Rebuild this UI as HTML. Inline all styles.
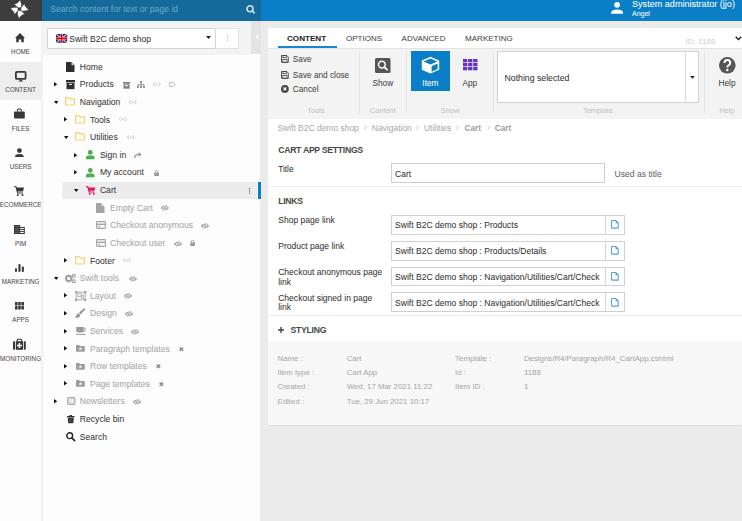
<!DOCTYPE html><html><head><meta charset="utf-8"><style>
*{box-sizing:border-box;margin:0;padding:0}
html,body{width:742px;height:521px;overflow:hidden;background:#ebebeb;font-family:"Liberation Sans",sans-serif;color:#333}
.a{position:absolute}
svg{position:absolute;overflow:visible}
.t{position:absolute;white-space:nowrap;line-height:1;-webkit-text-stroke:0.04px currentColor}
</style></head><body>
<div class="a" style="left:0px;top:0px;width:42px;height:21px;background:#3d3d3d"></div>
<svg style="left:0px;top:0px" width="42" height="21" viewBox="0 0 42 21"><g fill="#fff" stroke="#3d3d3d" stroke-width="0.55" transform="translate(19.5,9.2)"><path d="M-1.2,-1.4 L-5.4,-4.9 Q-1.8,-5.4 0.6,-9.4 Q2.4,-5.6 1.9,-1.6 Z"/><g transform="rotate(90)"><path d="M-1.2,-1.4 L-5.4,-4.9 Q-1.8,-5.4 0.6,-9.4 Q2.4,-5.6 1.9,-1.6 Z"/></g><g transform="rotate(180)"><path d="M-1.2,-1.4 L-5.4,-4.9 Q-1.8,-5.4 0.6,-9.4 Q2.4,-5.6 1.9,-1.6 Z"/></g><g transform="rotate(270)"><path d="M-1.2,-1.4 L-5.4,-4.9 Q-1.8,-5.4 0.6,-9.4 Q2.4,-5.6 1.9,-1.6 Z"/></g></g></svg>
<div class="a" style="left:42px;top:0px;width:219px;height:21px;background:#156a9c"></div>
<div class="t" style="left:50.2px;top:5px;font-size:8.66px;height:8.66px;line-height:8.66px;color:#6fa6c8;font-weight:normal;">Search content for text or page id</div>
<svg style="left:246px;top:5px" width="10" height="9" viewBox="0 0 10 9"><circle cx="4" cy="3.8" r="3" fill="none" stroke="#d6e6f0" stroke-width="1.5"/><path d="M6.2,6 L8.6,8.4" stroke="#d6e6f0" stroke-width="1.7"/></svg>
<div class="a" style="left:261px;top:0px;width:481px;height:21px;background:#0a7ec6"></div>
<svg style="left:610.6px;top:2px" width="12.2" height="12" viewBox="0 0 12.2 12"><circle cx="6.1" cy="2.9" r="2.8" fill="#fff"/><path d="M0,11.7 Q0,7.6 6.1,7.6 Q12.2,7.6 12.2,11.7 Z" fill="#fff"/></svg>
<div class="t" style="left:632px;top:0px;font-size:9.08px;height:9.08px;line-height:9.08px;color:#fff;font-weight:normal;">System administrator (jjo)</div>
<div class="t" style="left:632px;top:10px;font-size:7.0px;height:7.0px;line-height:7.0px;color:#fff;font-weight:normal;">Angel</div>
<div class="a" style="left:0px;top:21px;width:41px;height:500px;background:#fdfdfd"></div>
<div class="a" style="left:0px;top:61.5px;width:41px;height:38.3px;background:#eeeeee"></div>
<div class="t" style="left:-129.4px;width:300px;text-align:center;top:49px;font-size:6.3px;height:6.3px;line-height:6.3px;color:#4a4a4a;font-weight:normal;letter-spacing:0.02px">HOME</div>
<div class="t" style="left:-129.4px;width:300px;text-align:center;top:87px;font-size:6.3px;height:6.3px;line-height:6.3px;color:#4a4a4a;font-weight:normal;letter-spacing:0.02px">CONTENT</div>
<div class="t" style="left:-129.4px;width:300px;text-align:center;top:126px;font-size:6.3px;height:6.3px;line-height:6.3px;color:#4a4a4a;font-weight:normal;letter-spacing:0.02px">FILES</div>
<div class="t" style="left:-129.4px;width:300px;text-align:center;top:164px;font-size:6.3px;height:6.3px;line-height:6.3px;color:#4a4a4a;font-weight:normal;letter-spacing:0.02px">USERS</div>
<div class="t" style="left:-129.4px;width:300px;text-align:center;top:202px;font-size:6.3px;height:6.3px;line-height:6.3px;color:#4a4a4a;font-weight:normal;letter-spacing:0.02px">ECOMMERCE</div>
<div class="t" style="left:-129.4px;width:300px;text-align:center;top:241px;font-size:6.3px;height:6.3px;line-height:6.3px;color:#4a4a4a;font-weight:normal;letter-spacing:0.02px">PIM</div>
<div class="t" style="left:-129.4px;width:300px;text-align:center;top:279px;font-size:6.3px;height:6.3px;line-height:6.3px;color:#4a4a4a;font-weight:normal;letter-spacing:0.02px">MARKETING</div>
<div class="t" style="left:-129.4px;width:300px;text-align:center;top:317px;font-size:6.3px;height:6.3px;line-height:6.3px;color:#4a4a4a;font-weight:normal;letter-spacing:0.02px">APPS</div>
<div class="t" style="left:-129.4px;width:300px;text-align:center;top:356px;font-size:6.3px;height:6.3px;line-height:6.3px;color:#4a4a4a;font-weight:normal;letter-spacing:0.02px">MONITORING</div>
<svg style="left:14.5px;top:33px" width="10" height="9.2" viewBox="0 0 10 9.2"><path d="M5,0 L10,5 L8.8,5 L8.8,9.2 L6.3,9.2 L6.3,6.5 L3.7,6.5 L3.7,9.2 L1.2,9.2 L1.2,5 L0,5 Z" fill="#383838"/></svg>
<svg style="left:14.9px;top:70.8px" width="11.5" height="10.6" viewBox="0 0 11.5 10.6"><rect x="0.9" y="0.9" width="9.7" height="7" rx="1" fill="none" stroke="#383838" stroke-width="1.8"/><path d="M3.5,10.6 L5.75,8 L8,10.6 Z" fill="#383838"/></svg>
<svg style="left:14px;top:109px" width="10.8" height="9.6" viewBox="0 0 10.8 9.6"><path d="M3.5,2.6 L3.5,1 Q3.5,0 4.5,0 L6.3,0 Q7.3,0 7.3,1 L7.3,2.6" fill="none" stroke="#383838" stroke-width="1.1"/><rect x="0" y="2.4" width="10.8" height="7.2" rx="0.8" fill="#383838"/></svg>
<svg style="left:15px;top:148px" width="9" height="9" viewBox="0 0 9 9"><circle cx="4.4" cy="2.6" r="2.4" fill="#383838"/><path d="M0,9 Q0,6 4.4,6 Q8.8,6 8.8,9 Z" fill="#383838"/></svg>
<svg style="left:13.8px;top:185.8px" width="10.2" height="10.2" viewBox="0 0 10.2 10.2"><path d="M0.3,0.5 L2,0.8 L3.6,7 L9,7" fill="none" stroke="#383838" stroke-width="1.1"/><path d="M2.2,1.6 L10,1.6 L9,5.4 L3.2,5.4 Z" fill="#383838"/><circle cx="3.8" cy="9" r="1.05" fill="#383838"/><circle cx="8.5" cy="9" r="1.05" fill="#383838"/></svg>
<svg style="left:14px;top:224.8px" width="10.8" height="9" viewBox="0 0 10.8 9"><rect x="0.5" y="0.5" width="5.2" height="8" fill="none" stroke="#383838" stroke-width="1"/><rect x="0.5" y="2.5" width="9.8" height="6" fill="none" stroke="#383838" stroke-width="1"/><path d="M1,2.5 H5.5 M1,4.5 H10 M1,6.5 H10" stroke="#383838" stroke-width="0.9"/><rect x="0.5" y="0.5" width="5.2" height="8" fill="#383838" opacity="0.8"/></svg>
<svg style="left:15px;top:263.8px" width="9" height="8" viewBox="0 0 9 8"><rect x="0" y="4.2" width="2" height="3.8" rx="0.9" fill="#383838"/><rect x="3.4" y="0" width="2.1" height="8" rx="0.9" fill="#383838"/><rect x="6.8" y="2.5" width="2.1" height="5.5" rx="0.9" fill="#383838"/></svg>
<svg style="left:15px;top:302px" width="9" height="7.6" viewBox="0 0 9 7.6"><rect x="0.0" y="0.0" width="2.6" height="3.4" rx="0.3" fill="#383838"/><rect x="3.2" y="0.0" width="2.6" height="3.4" rx="0.3" fill="#383838"/><rect x="6.4" y="0.0" width="2.6" height="3.4" rx="0.3" fill="#383838"/><rect x="0.0" y="4.1" width="2.6" height="3.4" rx="0.3" fill="#383838"/><rect x="3.2" y="4.1" width="2.6" height="3.4" rx="0.3" fill="#383838"/><rect x="6.4" y="4.1" width="2.6" height="3.4" rx="0.3" fill="#383838"/></svg>
<svg style="left:13.1px;top:338.8px" width="12.8" height="10.8" viewBox="0 0 12.8 10.8"><path d="M4.2,2.3 V1 Q4.2,0.3 5,0.3 H7.8 Q8.6,0.3 8.6,1 V2.3" fill="none" stroke="#383838" stroke-width="1.1"/><rect x="0" y="2.2" width="2" height="8.6" rx="0.8" fill="#383838"/><rect x="10.8" y="2.2" width="2" height="8.6" rx="0.8" fill="#383838"/><rect x="2.8" y="2.2" width="7.2" height="8.6" fill="#383838"/><path d="M6.4,4 V9 M3.9,6.5 H8.9" stroke="#fff" stroke-width="1.6"/></svg>
<div class="a" style="left:41px;top:21px;width:220px;height:500px;background:#fdfdfd"></div>
<div class="a" style="left:40.8px;top:21px;width:2.3px;height:500px;background:#f1f1f1"></div>
<div class="a" style="left:41px;top:21px;width:210px;height:33.6px;background:#f3f3f3"></div>
<div class="a" style="left:251px;top:21px;width:10px;height:33px;background:#e3e3e3"></div>
<svg style="left:254.5px;top:34px" width="4" height="6" viewBox="0 0 4 6"><path d="M3.5,0 L0,3 L3.5,6 Z" fill="#fafafa"/></svg>
<div class="a" style="left:261px;top:21px;width:7px;height:500px;background:#ebebeb"></div>
<div class="a" style="left:260px;top:54.6px;width:1px;height:467px;background:linear-gradient(90deg,#f6f6f6,#e6e6e6)"></div>
<div class="a" style="left:47.3px;top:28px;width:168.5px;height:20.8px;background:#fff;border:1px solid #d4d4d4;border-radius:1px"></div>
<div class="a" style="left:215.8px;top:28px;width:23.6px;height:20.8px;background:#fff;border:1px solid #e2e2e2;border-left:none"></div>
<svg style="left:226.8px;top:35.3px" width="1" height="6" viewBox="0 0 1 6"><circle cx="0.5" cy="0.6" r="0.55" fill="#aaa"/><circle cx="0.5" cy="2.9" r="0.55" fill="#aaa"/><circle cx="0.5" cy="5.2" r="0.55" fill="#aaa"/></svg>
<svg style="left:206.3px;top:36.2px" width="5" height="3" viewBox="0 0 5 3"><path d="M0,0 H5 L2.5,3 Z" fill="#222"/></svg>
<svg style="left:55.8px;top:34px" width="11.2" height="8.75" viewBox="0 0 11.2 8.75"><svg width="11.2" height="8.75" viewBox="0 0 60 40" preserveAspectRatio="none"><rect width="60" height="40" fill="#00247d"/><path d="M0,0 L60,40 M60,0 L0,40" stroke="#fff" stroke-width="6"/><path d="M0,0 L60,40 M60,0 L0,40" stroke="#d0202a" stroke-width="2.2"/><path d="M30,0 V40 M0,20 H60" stroke="#fff" stroke-width="11"/><path d="M30,0 V40 M0,20 H60" stroke="#e00" stroke-width="7"/></svg></svg>
<div class="t" style="left:69.3px;top:35px;font-size:8.5px;height:8.5px;line-height:8.5px;color:#333;font-weight:normal;">Swift B2C demo shop</div>
<div class="a" style="left:61.7px;top:181.7px;width:195px;height:17.3px;background:#ececec"></div>
<div class="a" style="left:257.5px;top:181.7px;width:3.5px;height:17.3px;background:#0a7ec6"></div>
<svg style="left:249px;top:187.6px" width="1" height="6" viewBox="0 0 1 6"><circle cx="0.5" cy="0.7" r="0.6" fill="#444"/><circle cx="0.5" cy="2.9" r="0.6" fill="#444"/><circle cx="0.5" cy="5.1" r="0.6" fill="#444"/></svg>
<div class="t" style="left:79.8px;top:63px;font-size:8.6px;height:8.6px;line-height:8.6px;color:#383838;font-weight:normal;">Home</div>
<svg style="left:54px;top:82.11px" width="3.2" height="4.6" viewBox="0 0 3.2 4.6"><path d="M0,0 L3.2,2.3 L0,4.6 Z" fill="#111"/></svg>
<div class="t" style="left:79.8px;top:80px;font-size:8.6px;height:8.6px;line-height:8.6px;color:#383838;font-weight:normal;">Products</div>
<svg style="left:53.6px;top:100.72px" width="4.4" height="3" viewBox="0 0 4.4 3"><path d="M0,0 H4.4 L2.2,3 Z" fill="#111"/></svg>
<div class="t" style="left:79.8px;top:98px;font-size:8.6px;height:8.6px;line-height:8.6px;color:#383838;font-weight:normal;">Navigation</div>
<svg style="left:64.3px;top:117.33px" width="3.2" height="4.6" viewBox="0 0 3.2 4.6"><path d="M0,0 L3.2,2.3 L0,4.6 Z" fill="#111"/></svg>
<div class="t" style="left:90px;top:116px;font-size:8.6px;height:8.6px;line-height:8.6px;color:#383838;font-weight:normal;">Tools</div>
<svg style="left:63.9px;top:135.94px" width="4.4" height="3" viewBox="0 0 4.4 3"><path d="M0,0 H4.4 L2.2,3 Z" fill="#111"/></svg>
<div class="t" style="left:90px;top:133px;font-size:8.6px;height:8.6px;line-height:8.6px;color:#383838;font-weight:normal;">Utilities</div>
<svg style="left:74px;top:152.54999999999998px" width="3.2" height="4.6" viewBox="0 0 3.2 4.6"><path d="M0,0 L3.2,2.3 L0,4.6 Z" fill="#111"/></svg>
<div class="t" style="left:99.9px;top:151px;font-size:8.6px;height:8.6px;line-height:8.6px;color:#383838;font-weight:normal;">Sign in</div>
<svg style="left:74px;top:170.15999999999997px" width="3.2" height="4.6" viewBox="0 0 3.2 4.6"><path d="M0,0 L3.2,2.3 L0,4.6 Z" fill="#111"/></svg>
<div class="t" style="left:99.9px;top:168px;font-size:8.6px;height:8.6px;line-height:8.6px;color:#383838;font-weight:normal;">My account</div>
<svg style="left:73.6px;top:188.76999999999998px" width="4.4" height="3" viewBox="0 0 4.4 3"><path d="M0,0 H4.4 L2.2,3 Z" fill="#111"/></svg>
<div class="t" style="left:99.9px;top:186px;font-size:8.6px;height:8.6px;line-height:8.6px;color:#383838;font-weight:normal;">Cart</div>
<div class="t" style="left:110px;top:204px;font-size:8.6px;height:8.6px;line-height:8.6px;color:#a6a6a6;font-weight:normal;">Empty Cart</div>
<div class="t" style="left:110px;top:221px;font-size:8.6px;height:8.6px;line-height:8.6px;color:#a6a6a6;font-weight:normal;">Checkout anonymous</div>
<div class="t" style="left:110px;top:239px;font-size:8.6px;height:8.6px;line-height:8.6px;color:#a6a6a6;font-weight:normal;">Checkout user</div>
<svg style="left:64.3px;top:258.21px" width="3.2" height="4.6" viewBox="0 0 3.2 4.6"><path d="M0,0 L3.2,2.3 L0,4.6 Z" fill="#111"/></svg>
<div class="t" style="left:90px;top:257px;font-size:8.6px;height:8.6px;line-height:8.6px;color:#383838;font-weight:normal;">Footer</div>
<svg style="left:53.6px;top:276.82px" width="4.4" height="3" viewBox="0 0 4.4 3"><path d="M0,0 H4.4 L2.2,3 Z" fill="#111"/></svg>
<div class="t" style="left:79.8px;top:274px;font-size:8.6px;height:8.6px;line-height:8.6px;color:#a6a6a6;font-weight:normal;">Swift tools</div>
<svg style="left:64.3px;top:293.43px" width="3.2" height="4.6" viewBox="0 0 3.2 4.6"><path d="M0,0 L3.2,2.3 L0,4.6 Z" fill="#111"/></svg>
<div class="t" style="left:90px;top:292px;font-size:8.6px;height:8.6px;line-height:8.6px;color:#a6a6a6;font-weight:normal;">Layout</div>
<svg style="left:64.3px;top:311.03999999999996px" width="3.2" height="4.6" viewBox="0 0 3.2 4.6"><path d="M0,0 L3.2,2.3 L0,4.6 Z" fill="#111"/></svg>
<div class="t" style="left:90px;top:309px;font-size:8.6px;height:8.6px;line-height:8.6px;color:#a6a6a6;font-weight:normal;">Design</div>
<svg style="left:64.3px;top:328.65px" width="3.2" height="4.6" viewBox="0 0 3.2 4.6"><path d="M0,0 L3.2,2.3 L0,4.6 Z" fill="#111"/></svg>
<div class="t" style="left:90px;top:327px;font-size:8.6px;height:8.6px;line-height:8.6px;color:#a6a6a6;font-weight:normal;">Services</div>
<svg style="left:64.3px;top:346.26px" width="3.2" height="4.6" viewBox="0 0 3.2 4.6"><path d="M0,0 L3.2,2.3 L0,4.6 Z" fill="#111"/></svg>
<div class="t" style="left:90px;top:345px;font-size:8.6px;height:8.6px;line-height:8.6px;color:#a6a6a6;font-weight:normal;">Paragraph templates</div>
<svg style="left:64.3px;top:363.87px" width="3.2" height="4.6" viewBox="0 0 3.2 4.6"><path d="M0,0 L3.2,2.3 L0,4.6 Z" fill="#111"/></svg>
<div class="t" style="left:90px;top:362px;font-size:8.6px;height:8.6px;line-height:8.6px;color:#a6a6a6;font-weight:normal;">Row templates</div>
<svg style="left:64.3px;top:381.48px" width="3.2" height="4.6" viewBox="0 0 3.2 4.6"><path d="M0,0 L3.2,2.3 L0,4.6 Z" fill="#111"/></svg>
<div class="t" style="left:90px;top:380px;font-size:8.6px;height:8.6px;line-height:8.6px;color:#a6a6a6;font-weight:normal;">Page templates</div>
<svg style="left:54px;top:399.09px" width="3.2" height="4.6" viewBox="0 0 3.2 4.6"><path d="M0,0 L3.2,2.3 L0,4.6 Z" fill="#111"/></svg>
<div class="t" style="left:79.8px;top:397px;font-size:8.6px;height:8.6px;line-height:8.6px;color:#a6a6a6;font-weight:normal;">Newsletters</div>
<div class="t" style="left:79.8px;top:415px;font-size:8.6px;height:8.6px;line-height:8.6px;color:#383838;font-weight:normal;">Recycle bin</div>
<div class="t" style="left:79.8px;top:433px;font-size:8.6px;height:8.6px;line-height:8.6px;color:#383838;font-weight:normal;">Search</div>
<svg style="left:65.9px;top:61.8px" width="8.5" height="10" viewBox="0 0 8.5 10"><path d="M0,0.6 Q0,0 0.6,0 H5.2 L8.5,3.3 V9.4 Q8.5,10 7.9,10 H0.6 Q0,10 0,9.4 Z" fill="#2e2e2e"/><path d="M5.3,0.5 V3.2 H8" fill="#fff" stroke="#2e2e2e" stroke-width="0.5"/></svg>
<svg style="left:65.8px;top:79.91px" width="9" height="9.2" viewBox="0 0 9 9.2"><rect x="0" y="0" width="9" height="2.39" fill="#2e2e2e"/><rect x="0.5" y="2.99" width="8" height="6.21" fill="#2e2e2e"/><rect x="3.00" y="3.89" width="3" height="1" fill="#fff"/></svg>
<svg style="left:123px;top:81.56px" width="7.1" height="6.7" viewBox="0 0 7.1 6.7"><rect x="0" y="0" width="7.1" height="1.74" fill="#7d7d7d"/><rect x="0.5" y="2.34" width="6.1" height="4.36" fill="#7d7d7d"/><rect x="2.05" y="3.24" width="3" height="1" fill="#fff"/></svg>
<svg style="left:137.4px;top:81.30999999999999px" width="8" height="6.8" viewBox="0 0 8 6.8"><rect x="3" y="0" width="2" height="1.8" fill="#8a8a8a"/><path d="M4,1.8 V3.4 M1,5 V3.6 H7 V5 M4,3.4 V5" fill="none" stroke="#8a8a8a" stroke-width="0.8"/><rect x="0" y="4.8" width="2" height="2" fill="#8a8a8a"/><rect x="3" y="4.8" width="2" height="2" fill="#8a8a8a"/><rect x="6" y="4.8" width="2" height="2" fill="#8a8a8a"/></svg>
<svg style="left:152.8px;top:82.11px" width="7.6" height="4.6" viewBox="0 0 7.6 4.6"><path d="M2,0.3 L0.4,2.3 L2,4.3 M5.6,0.3 L7.2,2.3 L5.6,4.3 M2.6,2.3 H5" fill="none" stroke="#b5b5b5" stroke-width="0.8"/></svg>
<svg style="left:168.5px;top:81.91px" width="6.6" height="5" viewBox="0 0 6.6 5"><path d="M0.5,0.9 Q0.5,0.5 0.9,0.5 H4.3 L6.1,2.5 L4.3,4.5 H0.9 Q0.5,4.5 0.5,4.1 Z" fill="none" stroke="#b8b8b8" stroke-width="0.9"/></svg>
<svg style="left:65.2px;top:97.12px" width="10" height="8.6" viewBox="0 0 10 8.6"><path d="M0.6,1 Q0.6,0.6 1,0.6 H3.8 L5,1.9 H9 Q9.4,1.9 9.4,2.3 V7.6 Q9.4,8 9,8 H1 Q0.6,8 0.6,7.6 Z" fill="none" stroke="#fbcf6a" stroke-width="1.2" stroke-linejoin="round"/></svg>
<svg style="left:128.8px;top:99.72px" width="7.6" height="4.6" viewBox="0 0 7.6 4.6"><path d="M2,0.3 L0.4,2.3 L2,4.3 M5.6,0.3 L7.2,2.3 L5.6,4.3 M2.6,2.3 H5" fill="none" stroke="#b5b5b5" stroke-width="0.8"/></svg>
<svg style="left:75.2px;top:114.73px" width="10" height="8.6" viewBox="0 0 10 8.6"><path d="M0.6,1 Q0.6,0.6 1,0.6 H3.8 L5,1.9 H9 Q9.4,1.9 9.4,2.3 V7.6 Q9.4,8 9,8 H1 Q0.6,8 0.6,7.6 Z" fill="none" stroke="#fbcf6a" stroke-width="1.2" stroke-linejoin="round"/></svg>
<svg style="left:119px;top:117.33px" width="7.6" height="4.6" viewBox="0 0 7.6 4.6"><path d="M2,0.3 L0.4,2.3 L2,4.3 M5.6,0.3 L7.2,2.3 L5.6,4.3 M2.6,2.3 H5" fill="none" stroke="#b5b5b5" stroke-width="0.8"/></svg>
<svg style="left:75.2px;top:132.34px" width="10" height="8.6" viewBox="0 0 10 8.6"><path d="M0.6,1 Q0.6,0.6 1,0.6 H3.8 L5,1.9 H9 Q9.4,1.9 9.4,2.3 V7.6 Q9.4,8 9,8 H1 Q0.6,8 0.6,7.6 Z" fill="none" stroke="#fbcf6a" stroke-width="1.2" stroke-linejoin="round"/></svg>
<svg style="left:126.6px;top:134.94px" width="7.6" height="4.6" viewBox="0 0 7.6 4.6"><path d="M2,0.3 L0.4,2.3 L2,4.3 M5.6,0.3 L7.2,2.3 L5.6,4.3 M2.6,2.3 H5" fill="none" stroke="#b5b5b5" stroke-width="0.8"/></svg>
<svg style="left:86.2px;top:150.25px" width="8.5" height="9.2" viewBox="0 0 8.5 9.2"><circle cx="4.25" cy="2.4" r="2.4" fill="#4bae4f"/><path d="M0,9.2 V7.6 Q0,5.4 2.4,5.4 H6.1 Q8.5,5.4 8.5,7.6 V9.2 Z" fill="#4bae4f"/></svg>
<svg style="left:134px;top:151.85px" width="7.8" height="6.2" viewBox="0 0 7.8 6.2"><path d="M0.6,6 Q0.8,2.4 5,2.4" fill="none" stroke="#999" stroke-width="1.3"/><path d="M4.6,0 L7.8,2.4 L4.6,4.8 Z" fill="#999"/></svg>
<svg style="left:86.2px;top:167.85999999999999px" width="8.5" height="9.2" viewBox="0 0 8.5 9.2"><circle cx="4.25" cy="2.4" r="2.4" fill="#4bae4f"/><path d="M0,9.2 V7.6 Q0,5.4 2.4,5.4 H6.1 Q8.5,5.4 8.5,7.6 V9.2 Z" fill="#4bae4f"/></svg>
<svg style="left:154px;top:169.76px" width="5.2" height="6" viewBox="0 0 5.2 6"><path d="M1.2,2.6 V1.9 Q1.2,0.4 2.6,0.4 Q4,0.4 4,1.9 V2.6" fill="none" stroke="#999" stroke-width="0.9"/><rect x="0.2" y="2.6" width="4.8" height="3.4" rx="0.4" fill="#999"/></svg>
<svg style="left:85.9px;top:185.67px" width="9.5" height="8.8" viewBox="0 0 9.5 8.8"><path d="M0.2,0.6 L1.8,0.8 L3.2,6 L8.3,6" fill="none" stroke="#e0195a" stroke-width="1.2"/><path d="M2,1.5 L9.4,1.5 L8.5,4.8 L2.8,4.8 Z" fill="#e0195a"/><circle cx="3.6" cy="7.8" r="1" fill="#e0195a"/><circle cx="7.8" cy="7.8" r="1" fill="#e0195a"/></svg>
<svg style="left:96.2px;top:202.68px" width="8.5" height="10" viewBox="0 0 8.5 10"><path d="M0,0.6 Q0,0 0.6,0 H5.2 L8.5,3.3 V9.4 Q8.5,10 7.9,10 H0.6 Q0,10 0,9.4 Z" fill="#a3a3a3"/><path d="M5.3,0.5 V3.2 H8" fill="#fff" stroke="#a3a3a3" stroke-width="0.5"/></svg>
<svg style="left:161.4px;top:205.38px" width="8" height="5.8" viewBox="0 0 8 5.8"><path d="M0.6,2.9 Q4,-0.9 7.4,2.9 Q4,6.7 0.6,2.9 Z" fill="none" stroke="#9c9c9c" stroke-width="1.15"/><circle cx="4" cy="2.9" r="1.3" fill="#9c9c9c"/><path d="M2.3,5.9 L5.7,-0.1" stroke="#fdfdfd" stroke-width="1.5"/><path d="M2.4,5.6 L5.6,0.2" stroke="#9c9c9c" stroke-width="0.9"/></svg>
<svg style="left:95.6px;top:221.29000000000002px" width="10" height="8" viewBox="0 0 10 8"><rect x="0.6" y="0.6" width="8.8" height="6.8" rx="0.8" fill="none" stroke="#a3a3a3" stroke-width="1.1"/><rect x="0.6" y="2.6" width="8.8" height="1.4" fill="#a3a3a3"/><rect x="2" y="5.2" width="2.5" height="0.9" fill="#a3a3a3"/></svg>
<svg style="left:201.2px;top:222.99px" width="8" height="5.8" viewBox="0 0 8 5.8"><path d="M0.6,2.9 Q4,-0.9 7.4,2.9 Q4,6.7 0.6,2.9 Z" fill="none" stroke="#9c9c9c" stroke-width="1.15"/><circle cx="4" cy="2.9" r="1.3" fill="#9c9c9c"/><path d="M2.3,5.9 L5.7,-0.1" stroke="#fdfdfd" stroke-width="1.5"/><path d="M2.4,5.6 L5.6,0.2" stroke="#9c9c9c" stroke-width="0.9"/></svg>
<svg style="left:95.6px;top:238.89999999999998px" width="10" height="8" viewBox="0 0 10 8"><rect x="0.6" y="0.6" width="8.8" height="6.8" rx="0.8" fill="none" stroke="#a3a3a3" stroke-width="1.1"/><rect x="0.6" y="2.6" width="8.8" height="1.4" fill="#a3a3a3"/><rect x="2" y="5.2" width="2.5" height="0.9" fill="#a3a3a3"/></svg>
<svg style="left:173.6px;top:240.59999999999997px" width="8" height="5.8" viewBox="0 0 8 5.8"><path d="M0.6,2.9 Q4,-0.9 7.4,2.9 Q4,6.7 0.6,2.9 Z" fill="none" stroke="#9c9c9c" stroke-width="1.15"/><circle cx="4" cy="2.9" r="1.3" fill="#9c9c9c"/><path d="M2.3,5.9 L5.7,-0.1" stroke="#fdfdfd" stroke-width="1.5"/><path d="M2.4,5.6 L5.6,0.2" stroke="#9c9c9c" stroke-width="0.9"/></svg>
<svg style="left:190px;top:240.2px" width="5.2" height="6" viewBox="0 0 5.2 6"><path d="M1.2,2.6 V1.9 Q1.2,0.4 2.6,0.4 Q4,0.4 4,1.9 V2.6" fill="none" stroke="#999" stroke-width="0.9"/><rect x="0.2" y="2.6" width="4.8" height="3.4" rx="0.4" fill="#999"/></svg>
<svg style="left:74.80000000000001px;top:255.60999999999996px" width="10" height="8.6" viewBox="0 0 10 8.6"><path d="M0.6,1 Q0.6,0.6 1,0.6 H3.8 L5,1.9 H9 Q9.4,1.9 9.4,2.3 V7.6 Q9.4,8 9,8 H1 Q0.6,8 0.6,7.6 Z" fill="none" stroke="#fbcf6a" stroke-width="1.2" stroke-linejoin="round"/></svg>
<svg style="left:123px;top:258.21px" width="7.6" height="4.6" viewBox="0 0 7.6 4.6"><path d="M2,0.3 L0.4,2.3 L2,4.3 M5.6,0.3 L7.2,2.3 L5.6,4.3 M2.6,2.3 H5" fill="none" stroke="#b5b5b5" stroke-width="0.8"/></svg>
<svg style="left:64.8px;top:273.72px" width="11" height="8.8" viewBox="0 0 11 8.8"><g transform="translate(3.7,4.5)"><rect x="-0.9" y="-3.9" width="1.8" height="2" fill="#9b9b9b" transform="rotate(0)"/><rect x="-0.9" y="-3.9" width="1.8" height="2" fill="#9b9b9b" transform="rotate(45)"/><rect x="-0.9" y="-3.9" width="1.8" height="2" fill="#9b9b9b" transform="rotate(90)"/><rect x="-0.9" y="-3.9" width="1.8" height="2" fill="#9b9b9b" transform="rotate(135)"/><rect x="-0.9" y="-3.9" width="1.8" height="2" fill="#9b9b9b" transform="rotate(180)"/><rect x="-0.9" y="-3.9" width="1.8" height="2" fill="#9b9b9b" transform="rotate(225)"/><rect x="-0.9" y="-3.9" width="1.8" height="2" fill="#9b9b9b" transform="rotate(270)"/><rect x="-0.9" y="-3.9" width="1.8" height="2" fill="#9b9b9b" transform="rotate(315)"/><circle r="2.4" fill="none" stroke="#9b9b9b" stroke-width="1.5"/></g><circle cx="8.9" cy="1.7" r="1.45" fill="none" stroke="#9b9b9b" stroke-width="1.1"/><circle cx="8.9" cy="7.2" r="1.45" fill="none" stroke="#9b9b9b" stroke-width="1.1"/></svg>
<svg style="left:128.7px;top:275.82000000000005px" width="8" height="5.8" viewBox="0 0 8 5.8"><path d="M0.6,2.9 Q4,-0.9 7.4,2.9 Q4,6.7 0.6,2.9 Z" fill="none" stroke="#9c9c9c" stroke-width="1.15"/><circle cx="4" cy="2.9" r="1.3" fill="#9c9c9c"/><path d="M2.3,5.9 L5.7,-0.1" stroke="#fdfdfd" stroke-width="1.5"/><path d="M2.4,5.6 L5.6,0.2" stroke="#9c9c9c" stroke-width="0.9"/></svg>
<svg style="left:74.8px;top:291.03000000000003px" width="11.3" height="10" viewBox="0 0 11.3 10"><rect x="1.2" y="1.2" width="8.9" height="7.6" fill="none" stroke="#a8a8a8" stroke-width="0.9"/><rect x="0" y="0" width="2.4" height="2.4" fill="#a8a8a8"/><rect x="8.9" y="0" width="2.4" height="2.4" fill="#a8a8a8"/><rect x="0" y="7.6" width="2.4" height="2.4" fill="#a8a8a8"/><rect x="8.9" y="7.6" width="2.4" height="2.4" fill="#a8a8a8"/><rect x="3" y="2.8" width="3.2" height="2.8" fill="none" stroke="#a8a8a8" stroke-width="0.8"/><rect x="6.6" y="4.2" width="2" height="3" fill="none" stroke="#a8a8a8" stroke-width="0.8"/></svg>
<svg style="left:123.9px;top:293.43000000000006px" width="8" height="5.8" viewBox="0 0 8 5.8"><path d="M0.6,2.9 Q4,-0.9 7.4,2.9 Q4,6.7 0.6,2.9 Z" fill="none" stroke="#9c9c9c" stroke-width="1.15"/><circle cx="4" cy="2.9" r="1.3" fill="#9c9c9c"/><path d="M2.3,5.9 L5.7,-0.1" stroke="#fdfdfd" stroke-width="1.5"/><path d="M2.4,5.6 L5.6,0.2" stroke="#9c9c9c" stroke-width="0.9"/></svg>
<svg style="left:75.3px;top:308.34px" width="10.4" height="10" viewBox="0 0 10.4 10"><path d="M10,0.5 Q10.6,1 10,1.8 L5.6,6.4 L3.9,4.8 L8.6,0.5 Q9.3,-0.1 10,0.5 Z" fill="#9a9a9a"/><path d="M3.4,5.2 L5.2,7 Q5.2,8.6 3.6,9.5 Q2,10.2 0,9.8 Q1.1,9 1.3,7.6 Q1.5,5.6 3.4,5.2 Z" fill="#9a9a9a"/></svg>
<svg style="left:124.9px;top:311.04px" width="8" height="5.8" viewBox="0 0 8 5.8"><path d="M0.6,2.9 Q4,-0.9 7.4,2.9 Q4,6.7 0.6,2.9 Z" fill="none" stroke="#9c9c9c" stroke-width="1.15"/><circle cx="4" cy="2.9" r="1.3" fill="#9c9c9c"/><path d="M2.3,5.9 L5.7,-0.1" stroke="#fdfdfd" stroke-width="1.5"/><path d="M2.4,5.6 L5.6,0.2" stroke="#9c9c9c" stroke-width="0.9"/></svg>
<svg style="left:75.6px;top:326.95px" width="10.2" height="7.9" viewBox="0 0 10.2 7.9"><path d="M0.2,0 H7.8 V3.8 Q7.8,5.6 6,5.6 H2 Q0.2,5.6 0.2,3.8 Z" fill="#9a9a9a"/><path d="M7.6,1 Q9.8,1 9.6,2.6 Q9.4,4.2 7.4,4.2" fill="none" stroke="#9a9a9a" stroke-width="1"/><rect x="0" y="6.9" width="9.6" height="1" fill="#9a9a9a"/></svg>
<svg style="left:130.8px;top:328.65000000000003px" width="8" height="5.8" viewBox="0 0 8 5.8"><path d="M0.6,2.9 Q4,-0.9 7.4,2.9 Q4,6.7 0.6,2.9 Z" fill="none" stroke="#9c9c9c" stroke-width="1.15"/><circle cx="4" cy="2.9" r="1.3" fill="#9c9c9c"/><path d="M2.3,5.9 L5.7,-0.1" stroke="#fdfdfd" stroke-width="1.5"/><path d="M2.4,5.6 L5.6,0.2" stroke="#9c9c9c" stroke-width="0.9"/></svg>
<svg style="left:76px;top:345.16px" width="8.8" height="6.8" viewBox="0 0 8.8 6.8"><path d="M0,0.4 Q0,0 0.4,0 H3 L4,1 H8.4 Q8.8,1 8.8,1.4 V6.4 Q8.8,6.8 8.4,6.8 H0.4 Q0,6.8 0,6.4 Z" fill="#9d9d9d"/><path d="M4.4,2 L4.9,3.3 L6.2,3.3 L5.2,4.1 L5.6,5.4 L4.4,4.6 L3.2,5.4 L3.6,4.1 L2.6,3.3 L3.9,3.3 Z" fill="#fff"/></svg>
<svg style="left:178.7px;top:346.76px" width="4.8" height="4.6" viewBox="0 0 4.8 4.6"><path d="M0.6,0.6 L4.2,4 M4.2,0.6 L0.6,4" stroke="#858585" stroke-width="1.35"/></svg>
<svg style="left:76px;top:362.77000000000004px" width="8.8" height="6.8" viewBox="0 0 8.8 6.8"><path d="M0,0.4 Q0,0 0.4,0 H3 L4,1 H8.4 Q8.8,1 8.8,1.4 V6.4 Q8.8,6.8 8.4,6.8 H0.4 Q0,6.8 0,6.4 Z" fill="#9d9d9d"/><path d="M4.4,2 L4.9,3.3 L6.2,3.3 L5.2,4.1 L5.6,5.4 L4.4,4.6 L3.2,5.4 L3.6,4.1 L2.6,3.3 L3.9,3.3 Z" fill="#fff"/></svg>
<svg style="left:155.9px;top:364.37px" width="4.8" height="4.6" viewBox="0 0 4.8 4.6"><path d="M0.6,0.6 L4.2,4 M4.2,0.6 L0.6,4" stroke="#858585" stroke-width="1.35"/></svg>
<svg style="left:76px;top:380.38000000000005px" width="8.8" height="6.8" viewBox="0 0 8.8 6.8"><path d="M0,0.4 Q0,0 0.4,0 H3 L4,1 H8.4 Q8.8,1 8.8,1.4 V6.4 Q8.8,6.8 8.4,6.8 H0.4 Q0,6.8 0,6.4 Z" fill="#9d9d9d"/><path d="M4.4,2 L4.9,3.3 L6.2,3.3 L5.2,4.1 L5.6,5.4 L4.4,4.6 L3.2,5.4 L3.6,4.1 L2.6,3.3 L3.9,3.3 Z" fill="#fff"/></svg>
<svg style="left:158.6px;top:381.98px" width="4.8" height="4.6" viewBox="0 0 4.8 4.6"><path d="M0.6,0.6 L4.2,4 M4.2,0.6 L0.6,4" stroke="#858585" stroke-width="1.35"/></svg>
<svg style="left:66.5px;top:397.39px" width="8.5" height="8" viewBox="0 0 8.5 8"><rect x="0.6" y="0.6" width="7.3" height="6.8" rx="1.5" fill="#e2e2e2" stroke="#ababab" stroke-width="1.2"/><path d="M2,2.6 L4.25,4.4 L6.5,2.6" fill="none" stroke="#fff" stroke-width="1"/></svg>
<svg style="left:133.2px;top:399.09000000000003px" width="8" height="5.8" viewBox="0 0 8 5.8"><path d="M0.6,2.9 Q4,-0.9 7.4,2.9 Q4,6.7 0.6,2.9 Z" fill="none" stroke="#9c9c9c" stroke-width="1.15"/><circle cx="4" cy="2.9" r="1.3" fill="#9c9c9c"/><path d="M2.3,5.9 L5.7,-0.1" stroke="#fdfdfd" stroke-width="1.5"/><path d="M2.4,5.6 L5.6,0.2" stroke="#9c9c9c" stroke-width="0.9"/></svg>
<svg style="left:67px;top:414.9px" width="7.5" height="8.2" viewBox="0 0 7.5 8.2"><rect x="0" y="1" width="7.5" height="1.1" fill="#2f2f2f"/><rect x="2.6" y="0" width="2.3" height="1.2" fill="#2f2f2f"/><path d="M0.7,2.4 H6.8 L6.3,8.2 H1.2 Z" fill="#2f2f2f"/><path d="M2.6,3.3 V7.3 M3.75,3.3 V7.3 M4.9,3.3 V7.3" stroke="#777" stroke-width="0.35"/></svg>
<svg style="left:66px;top:432.11px" width="9" height="9" viewBox="0 0 9 9"><circle cx="3.7" cy="3.7" r="2.9" fill="none" stroke="#222" stroke-width="1.4"/><path d="M5.9,5.9 L8.6,8.6" stroke="#222" stroke-width="1.6" stroke-linecap="round"/></svg>
<div class="a" style="left:267.5px;top:27.5px;width:474.5px;height:20.5px;background:#fff"></div>
<div class="a" style="left:267.5px;top:47.8px;width:474.5px;height:1.2px;background:#e2e2e2"></div>
<div class="t" style="left:287px;top:35px;font-size:8.1px;height:8.1px;line-height:8.1px;color:#222;font-weight:bold;">CONTENT</div>
<div class="t" style="left:346px;top:35px;font-size:8.0px;height:8.0px;line-height:8.0px;color:#444;font-weight:normal;">OPTIONS</div>
<div class="t" style="left:401.6px;top:35px;font-size:8.0px;height:8.0px;line-height:8.0px;color:#444;font-weight:normal;">ADVANCED</div>
<div class="t" style="left:465px;top:35px;font-size:8.06px;height:8.06px;line-height:8.06px;color:#444;font-weight:normal;">MARKETING</div>
<div class="a" style="left:277.5px;top:46.2px;width:59px;height:1.9px;background:#1a86cf"></div>
<div class="t" style="left:685.6px;top:38px;font-size:8.0px;height:8.0px;line-height:8.0px;color:#d4d4d4;font-weight:normal;">ID: 1188</div>
<svg style="left:734.8px;top:36.4px" width="7" height="4.4" viewBox="0 0 7 4.4"><path d="M0.7,0.7 L3.5,3.5 L6.3,0.7" fill="none" stroke="#222" stroke-width="1.4"/></svg>
<div class="a" style="left:267.5px;top:49px;width:474.5px;height:69.5px;background:#f3f3f3"></div>
<div class="a" style="left:359px;top:52px;width:0.8px;height:61px;background:#e2e2e2"></div>
<div class="a" style="left:406.3px;top:52px;width:0.8px;height:61px;background:#e2e2e2"></div>
<div class="a" style="left:492.6px;top:52px;width:0.8px;height:61px;background:#e2e2e2"></div>
<div class="a" style="left:703.6px;top:52px;width:0.8px;height:61px;background:#e2e2e2"></div>
<svg style="left:281.2px;top:55.4px" width="7.8" height="7.8" viewBox="0 0 7.8 7.8"><path d="M0.5,0.5 H5.8 L7.3,2 V7.3 H0.5 Z" fill="none" stroke="#444" stroke-width="0.9"/><rect x="2" y="0.5" width="3.3" height="2.2" fill="none" stroke="#444" stroke-width="0.8"/><rect x="1.8" y="4.4" width="4.2" height="2.9" fill="none" stroke="#444" stroke-width="0.8"/></svg>
<div class="t" style="left:292.8px;top:56px;font-size:8.26px;height:8.26px;line-height:8.26px;color:#444;font-weight:normal;">Save</div>
<svg style="left:281.2px;top:70.5px" width="7.8" height="7.8" viewBox="0 0 7.8 7.8"><path d="M0.5,0.5 H5.8 L7.3,2 V7.3 H0.5 Z" fill="none" stroke="#444" stroke-width="0.9"/><rect x="2" y="0.5" width="3.3" height="2.2" fill="none" stroke="#444" stroke-width="0.8"/><rect x="1.8" y="4.4" width="4.2" height="2.9" fill="none" stroke="#444" stroke-width="0.8"/></svg>
<div class="t" style="left:292.8px;top:72px;font-size:8.26px;height:8.26px;line-height:8.26px;color:#444;font-weight:normal;">Save and close</div>
<svg style="left:281.2px;top:85.3px" width="7.8" height="7.8" viewBox="0 0 7.8 7.8"><circle cx="3.9" cy="3.9" r="3.9" fill="#444"/><path d="M2.4,2.4 L5.4,5.4 M5.4,2.4 L2.4,5.4" stroke="#fff" stroke-width="1.1"/></svg>
<div class="t" style="left:292.8px;top:86px;font-size:8.26px;height:8.26px;line-height:8.26px;color:#444;font-weight:normal;">Cancel</div>
<div class="t" style="left:166px;width:300px;text-align:center;top:107px;font-size:7.4px;height:7.4px;line-height:7.4px;color:#c2c2c2;font-weight:normal;">Tools</div>
<svg style="left:375.2px;top:57.7px" width="15.5" height="15.1" viewBox="0 0 15.5 15.1"><rect width="15.5" height="15.1" rx="1.6" fill="#555"/><circle cx="6.9" cy="6.6" r="3.4" fill="none" stroke="#fff" stroke-width="1.5"/><path d="M9.4,9.1 L12,11.7" stroke="#fff" stroke-width="1.9" stroke-linecap="round"/></svg>
<div class="t" style="left:232.8px;width:300px;text-align:center;top:80px;font-size:8.26px;height:8.26px;line-height:8.26px;color:#444;font-weight:normal;">Show</div>
<div class="t" style="left:232.8px;width:300px;text-align:center;top:107px;font-size:7.4px;height:7.4px;line-height:7.4px;color:#c2c2c2;font-weight:normal;">Content</div>
<div class="a" style="left:410.8px;top:51.2px;width:39.2px;height:39.8px;background:#0a7ec6"></div>
<svg style="left:420.5px;top:56.2px" width="19" height="18.3" viewBox="0 0 19 18.3"><path d="M9.5,0.8 L18.2,4.6 V13.8 L9.5,17.6 L0.8,13.8 V4.6 Z" fill="#fff"/><path d="M2.6,5.4 L9.5,8.6 L16.4,5.4 L9.5,2.6 Z" fill="#0a7ec6"/><path d="M10.6,10.2 L16.6,7.4 V13.1 L10.6,15.7 Z" fill="#0a7ec6"/></svg>
<div class="t" style="left:280.4px;width:300px;text-align:center;top:80px;font-size:8.26px;height:8.26px;line-height:8.26px;color:#fff;font-weight:normal;">Item</div>
<svg style="left:462.5px;top:59px" width="14.7" height="11.2" viewBox="0 0 14.7 11.2"><rect x="0.0" y="0" width="4.3" height="3.3" fill="#6633bb"/><rect x="5.1" y="0" width="4.3" height="3.3" fill="#6633bb"/><rect x="10.2" y="0" width="4.3" height="3.3" fill="#6633bb"/><rect x="0.0" y="4" width="4.3" height="3.3" fill="#6633bb"/><rect x="5.1" y="4" width="4.3" height="3.3" fill="#6633bb"/><rect x="10.2" y="4" width="4.3" height="3.3" fill="#6633bb"/><rect x="0.0" y="8" width="4.3" height="3.3" fill="#6633bb"/><rect x="5.1" y="8" width="4.3" height="3.3" fill="#6633bb"/><rect x="10.2" y="8" width="4.3" height="3.3" fill="#6633bb"/></svg>
<div class="t" style="left:319.8px;width:300px;text-align:center;top:80px;font-size:8.26px;height:8.26px;line-height:8.26px;color:#444;font-weight:normal;">App</div>
<div class="t" style="left:300px;width:300px;text-align:center;top:107px;font-size:7.4px;height:7.4px;line-height:7.4px;color:#c2c2c2;font-weight:normal;">Show</div>
<div class="a" style="left:497px;top:51.3px;width:202px;height:51.3px;background:#fff;border:1px solid #d2d2d2"></div>
<div class="a" style="left:685.3px;top:52.5px;width:0.9px;height:49.5px;background:#d8d8d8"></div>
<svg style="left:689.8px;top:76.1px" width="4.8" height="2.8" viewBox="0 0 4.8 2.8"><path d="M0,0 H4.8 L2.4,2.8 Z" fill="#222"/></svg>
<div class="t" style="left:504.5px;top:74px;font-size:8.72px;height:8.72px;line-height:8.72px;color:#333;font-weight:normal;">Nothing selected</div>
<div class="t" style="left:448px;width:300px;text-align:center;top:107px;font-size:7.4px;height:7.4px;line-height:7.4px;color:#c2c2c2;font-weight:normal;">Template</div>
<svg style="left:718.8px;top:57.2px" width="16.6" height="16.6" viewBox="0 0 16.6 16.6"><circle cx="8.3" cy="8.3" r="8.3" fill="#555"/><path d="M5.5,6.1 Q5.5,3.1 8.3,3.1 Q11.2,3.1 11.2,5.8 Q11.2,7.5 9.5,8.3 Q8.3,8.9 8.3,10.5" fill="none" stroke="#fff" stroke-width="2"/><circle cx="8.3" cy="13" r="1.2" fill="#fff"/></svg>
<div class="t" style="left:577px;width:300px;text-align:center;top:80px;font-size:8.26px;height:8.26px;line-height:8.26px;color:#444;font-weight:normal;">Help</div>
<div class="t" style="left:577px;width:300px;text-align:center;top:107px;font-size:7.4px;height:7.4px;line-height:7.4px;color:#c2c2c2;font-weight:normal;">Help</div>
<div class="a" style="left:267.5px;top:118.5px;width:474.5px;height:16.5px;background:#fff"></div>
<div class="a" style="left:267.5px;top:134.6px;width:474.5px;height:0.8px;background:#ececec"></div>
<div class="t" style="left:277.4px;top:124px;font-size:8.47px;height:8.47px;line-height:8.47px;color:#ababab;font-weight:normal;">Swift B2C demo shop</div>
<svg style="left:364px;top:124.8px" width="3.2" height="4.8" viewBox="0 0 3.2 4.8"><path d="M0.5,0.4 L2.7,2.4 L0.5,4.4" fill="none" stroke="#c2c2c2" stroke-width="0.9"/></svg>
<div class="t" style="left:371.8px;top:124px;font-size:8.47px;height:8.47px;line-height:8.47px;color:#ababab;font-weight:normal;">Navigation</div>
<svg style="left:416px;top:124.8px" width="3.2" height="4.8" viewBox="0 0 3.2 4.8"><path d="M0.5,0.4 L2.7,2.4 L0.5,4.4" fill="none" stroke="#c2c2c2" stroke-width="0.9"/></svg>
<div class="t" style="left:424px;top:124px;font-size:8.47px;height:8.47px;line-height:8.47px;color:#ababab;font-weight:normal;">Utilities</div>
<svg style="left:455.8px;top:124.8px" width="3.2" height="4.8" viewBox="0 0 3.2 4.8"><path d="M0.5,0.4 L2.7,2.4 L0.5,4.4" fill="none" stroke="#c2c2c2" stroke-width="0.9"/></svg>
<div class="t" style="left:464.4px;top:124px;font-size:8.3px;height:8.3px;line-height:8.3px;color:#9f9f9f;font-weight:bold;">Cart</div>
<svg style="left:487.2px;top:124.8px" width="3.2" height="4.8" viewBox="0 0 3.2 4.8"><path d="M0.5,0.4 L2.7,2.4 L0.5,4.4" fill="none" stroke="#c2c2c2" stroke-width="0.9"/></svg>
<div class="t" style="left:494.7px;top:124px;font-size:8.3px;height:8.3px;line-height:8.3px;color:#9f9f9f;font-weight:bold;">Cart</div>
<div class="a" style="left:267.5px;top:135.4px;width:474.5px;height:206px;background:#fff"></div>
<div class="t" style="left:278.2px;top:146px;font-size:8.7px;height:8.7px;line-height:8.7px;color:#4a4a4a;font-weight:bold;letter-spacing:-0.3px">CART APP SETTINGS</div>
<div class="t" style="left:278.2px;top:165px;font-size:8.3px;height:8.3px;line-height:8.3px;color:#333;font-weight:normal;">Title</div>
<div class="a" style="left:390.7px;top:163.2px;width:214.6px;height:20.1px;background:#fff;border:1px solid #cfcfcf"></div>
<div class="t" style="left:395.1px;top:170px;font-size:8.5px;height:8.5px;line-height:8.5px;color:#333;font-weight:normal;">Cart</div>
<div class="t" style="left:614.5px;top:170px;font-size:8.6px;height:8.6px;line-height:8.6px;color:#666;font-weight:normal;">Used as title</div>
<div class="a" style="left:267.5px;top:186.1px;width:474.5px;height:0.9px;background:#ececec"></div>
<div class="t" style="left:278.2px;top:197px;font-size:8.7px;height:8.7px;line-height:8.7px;color:#4a4a4a;font-weight:bold;letter-spacing:-0.3px">LINKS</div>
<div class="t" style="left:278.2px;top:216px;font-size:8.55px;height:8.55px;line-height:8.55px;color:#333;font-weight:normal;">Shop page link</div>
<div class="t" style="left:278.2px;top:242px;font-size:8.55px;height:8.55px;line-height:8.55px;color:#333;font-weight:normal;">Product page link</div>
<div class="t" style="left:278.2px;top:268px;font-size:8.55px;height:8.55px;line-height:8.55px;color:#333;font-weight:normal;">Checkout anonymous page</div>
<div class="t" style="left:278.2px;top:278px;font-size:8.55px;height:8.55px;line-height:8.55px;color:#333;font-weight:normal;">link</div>
<div class="t" style="left:278.2px;top:294px;font-size:8.55px;height:8.55px;line-height:8.55px;color:#333;font-weight:normal;">Checkout signed in page</div>
<div class="t" style="left:278.2px;top:303px;font-size:8.55px;height:8.55px;line-height:8.55px;color:#333;font-weight:normal;">link</div>
<div class="a" style="left:390.7px;top:215px;width:234.2px;height:19.599999999999994px;background:#fff;border:1px solid #d0d0d0"></div>
<div class="t" style="left:395.1px;top:221px;font-size:8.54px;height:8.54px;line-height:8.54px;color:#333;font-weight:normal;width:205.8px;overflow:hidden">Swift B2C demo shop : Products</div>
<div class="a" style="left:605.3px;top:215px;width:0.9px;height:19.599999999999994px;background:#d6d6d6"></div>
<svg style="left:611.3px;top:220.3px" width="7.8" height="8.7" viewBox="0 0 7.8 8.7"><path d="M0.55,1.2 Q0.55,0.55 1.2,0.55 H4.8 L7.25,3 V7.5 Q7.25,8.15 6.6,8.15 H1.2 Q0.55,8.15 0.55,7.5 Z" fill="none" stroke="#52a4da" stroke-width="1.1"/><path d="M4.6,0.6 V3.2 H7.2 Z" fill="#52a4da"/></svg>
<div class="a" style="left:390.7px;top:241px;width:234.2px;height:19.5px;background:#fff;border:1px solid #d0d0d0"></div>
<div class="t" style="left:395.1px;top:247px;font-size:8.54px;height:8.54px;line-height:8.54px;color:#333;font-weight:normal;width:205.8px;overflow:hidden">Swift B2C demo shop : Products/Details</div>
<div class="a" style="left:605.3px;top:241px;width:0.9px;height:19.5px;background:#d6d6d6"></div>
<svg style="left:611.3px;top:246.25px" width="7.8" height="8.7" viewBox="0 0 7.8 8.7"><path d="M0.55,1.2 Q0.55,0.55 1.2,0.55 H4.8 L7.25,3 V7.5 Q7.25,8.15 6.6,8.15 H1.2 Q0.55,8.15 0.55,7.5 Z" fill="none" stroke="#52a4da" stroke-width="1.1"/><path d="M4.6,0.6 V3.2 H7.2 Z" fill="#52a4da"/></svg>
<div class="a" style="left:390.7px;top:266.6px;width:234.2px;height:19.5px;background:#fff;border:1px solid #d0d0d0"></div>
<div class="t" style="left:395.1px;top:273px;font-size:8.54px;height:8.54px;line-height:8.54px;color:#333;font-weight:normal;width:205.8px;overflow:hidden">Swift B2C demo shop : Navigation/Utilities/Cart/Check</div>
<div class="a" style="left:605.3px;top:266.6px;width:0.9px;height:19.5px;background:#d6d6d6"></div>
<svg style="left:611.3px;top:271.85px" width="7.8" height="8.7" viewBox="0 0 7.8 8.7"><path d="M0.55,1.2 Q0.55,0.55 1.2,0.55 H4.8 L7.25,3 V7.5 Q7.25,8.15 6.6,8.15 H1.2 Q0.55,8.15 0.55,7.5 Z" fill="none" stroke="#52a4da" stroke-width="1.1"/><path d="M4.6,0.6 V3.2 H7.2 Z" fill="#52a4da"/></svg>
<div class="a" style="left:390.7px;top:292.2px;width:234.2px;height:19.600000000000023px;background:#fff;border:1px solid #d0d0d0"></div>
<div class="t" style="left:395.1px;top:299px;font-size:8.54px;height:8.54px;line-height:8.54px;color:#333;font-weight:normal;width:205.8px;overflow:hidden">Swift B2C demo shop : Navigation/Utilities/Cart/Check</div>
<div class="a" style="left:605.3px;top:292.2px;width:0.9px;height:19.600000000000023px;background:#d6d6d6"></div>
<svg style="left:611.3px;top:297.5px" width="7.8" height="8.7" viewBox="0 0 7.8 8.7"><path d="M0.55,1.2 Q0.55,0.55 1.2,0.55 H4.8 L7.25,3 V7.5 Q7.25,8.15 6.6,8.15 H1.2 Q0.55,8.15 0.55,7.5 Z" fill="none" stroke="#52a4da" stroke-width="1.1"/><path d="M4.6,0.6 V3.2 H7.2 Z" fill="#52a4da"/></svg>
<div class="a" style="left:267.5px;top:315.1px;width:474.5px;height:0.9px;background:#ececec"></div>
<svg style="left:278px;top:327px" width="6" height="6" viewBox="0 0 6 6"><path d="M3,0 V6 M0,3 H6" stroke="#444" stroke-width="1.4"/></svg>
<div class="t" style="left:290.6px;top:326px;font-size:8.7px;height:8.7px;line-height:8.7px;color:#4a4a4a;font-weight:bold;letter-spacing:-0.3px">STYLING</div>
<div class="a" style="left:267.5px;top:341.3px;width:474.5px;height:83.5px;background:#f7f7f7;box-shadow:0 0.8px 0.8px #dcdcdc"></div>
<div class="t" style="left:277.5px;top:355px;font-size:7.85px;height:7.85px;line-height:7.85px;color:#a8a8a8;font-weight:normal;">Name :</div>
<div class="t" style="left:346.7px;top:355px;font-size:7.85px;height:7.85px;line-height:7.85px;color:#a8a8a8;font-weight:normal;">Cart</div>
<div class="t" style="left:455.1px;top:355px;font-size:7.85px;height:7.85px;line-height:7.85px;color:#a8a8a8;font-weight:normal;">Template :</div>
<div class="t" style="left:523.9px;top:355px;font-size:7.85px;height:7.85px;line-height:7.85px;color:#a8a8a8;font-weight:normal;">Designs/R4/Paragraph/R4_CartApp.cshtml</div>
<div class="t" style="left:277.5px;top:369px;font-size:7.85px;height:7.85px;line-height:7.85px;color:#a8a8a8;font-weight:normal;">Item type :</div>
<div class="t" style="left:346.7px;top:369px;font-size:7.85px;height:7.85px;line-height:7.85px;color:#a8a8a8;font-weight:normal;">Cart App</div>
<div class="t" style="left:455.1px;top:369px;font-size:7.85px;height:7.85px;line-height:7.85px;color:#a8a8a8;font-weight:normal;">Id :</div>
<div class="t" style="left:523.9px;top:369px;font-size:7.85px;height:7.85px;line-height:7.85px;color:#a8a8a8;font-weight:normal;">1188</div>
<div class="t" style="left:277.5px;top:383px;font-size:7.85px;height:7.85px;line-height:7.85px;color:#a8a8a8;font-weight:normal;">Created :</div>
<div class="t" style="left:346.7px;top:383px;font-size:7.85px;height:7.85px;line-height:7.85px;color:#a8a8a8;font-weight:normal;">Wed, 17 Mar 2021 11:22</div>
<div class="t" style="left:455.1px;top:383px;font-size:7.85px;height:7.85px;line-height:7.85px;color:#a8a8a8;font-weight:normal;">Item ID :</div>
<div class="t" style="left:523.9px;top:383px;font-size:7.85px;height:7.85px;line-height:7.85px;color:#a8a8a8;font-weight:normal;">1</div>
<div class="t" style="left:277.5px;top:398px;font-size:7.85px;height:7.85px;line-height:7.85px;color:#a8a8a8;font-weight:normal;">Edited :</div>
<div class="t" style="left:346.7px;top:398px;font-size:7.85px;height:7.85px;line-height:7.85px;color:#a8a8a8;font-weight:normal;">Tue, 29 Jun 2021 10:17</div>
<div class="t" style="left:455.1px;top:398px;font-size:7.85px;height:7.85px;line-height:7.85px;color:#a8a8a8;font-weight:normal;"></div>
<div class="t" style="left:523.9px;top:398px;font-size:7.85px;height:7.85px;line-height:7.85px;color:#a8a8a8;font-weight:normal;"></div>
</body></html>
